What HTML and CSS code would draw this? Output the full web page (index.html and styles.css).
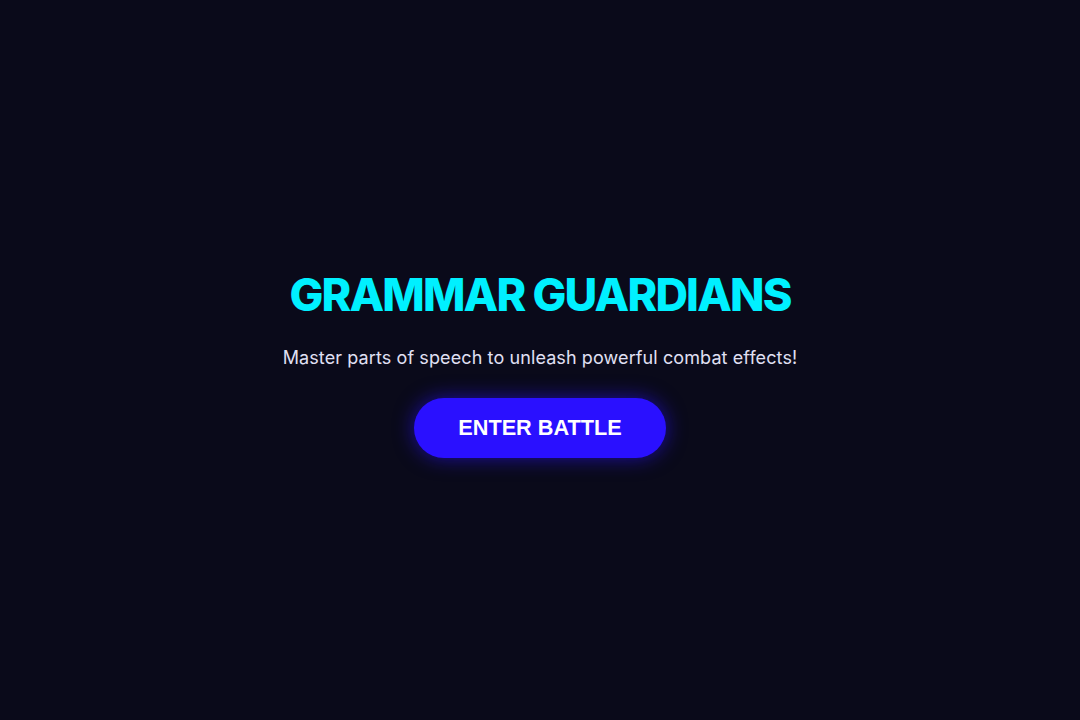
FILE: index.html
```html
<!DOCTYPE html>
<html lang="en">
<head>
<meta charset="utf-8">
<title>Grammar Guardians</title>
<link rel="stylesheet" href="styles.css">
</head>
<body>
<main class="screen">
  <h1 class="title">GRAMMAR GUARDIANS</h1>
  <p class="subtitle">Master parts of speech to unleash powerful combat effects!</p>
  <button class="cta">ENTER BATTLE</button>
</main>
</body>
</html>
```

FILE: styles.css
```css
html, body {
  margin: 0;
  padding: 0;
  height: 100%;
  background: #0a0a1a;
}
.screen {
  box-sizing: border-box;
  height: 720px;
  padding-top: 267px;
  display: flex;
  flex-direction: column;
  align-items: center;
  font-family: "Inter", "Liberation Sans", sans-serif;
}
.title {
  margin: 0 0 22px 0;
  font-size: 45px;
  line-height: 55px;
  font-weight: 800;
  color: #00f0ff;
  letter-spacing: -1.8px;
}
.subtitle {
  margin: 0 0 27px 0;
  font-size: 18px;
  line-height: 27px;
  color: #e0e0f4;
  letter-spacing: 0.1px;
}
.cta {
  width: 252px;
  height: 60px;
  border: none;
  border-radius: 30px;
  background: #2a10ff;
  color: #ffffff;
  font-family: "Liberation Sans", Arial, sans-serif;
  font-weight: 700;
  font-size: 21.7px;
  box-shadow: 0 0 20px rgba(42, 16, 255, 0.6);
  cursor: pointer;
}
```
